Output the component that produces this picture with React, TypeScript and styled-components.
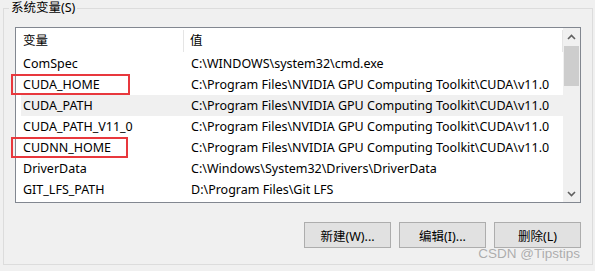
import React from "react";
import styled, { createGlobalStyle } from "styled-components";

const Global = createGlobalStyle`
  html, body { margin: 0; padding: 0; background: #f0f0f0; }
  body {
    font-family: "Noto Sans", "Noto Sans CJK SC", sans-serif;
    font-size: 12.5px;
    color: #000;
  }
`;

const Page = styled.div`
  width: 595px;
  height: 271px;
  position: relative;
  overflow: hidden;
  background: #f0f0f0;
`;

const Group = styled.fieldset`
  margin: 0 2px 0 3px;
  padding: 11px 11px 16px 11px;
  border: 1px solid #dcdcdc;
  min-width: 0;
`;

const Legend = styled.legend`
  margin-left: -6px;
  padding: 0 2px;
  font-size: 12.5px;
  line-height: 16px;
`;

const ListBox = styled.div`
  position: relative;
  height: 174px;
  border: 1px solid #828790;
  background: #fff;
  display: flex;
`;

const ListBody = styled.div`
  flex: 1;
  padding-left: 5px;
  display: flex;
  flex-direction: column;
`;

const HeaderRow = styled.div`
  display: grid;
  grid-template-columns: 163px 1fr;
  height: 25px;
`;

const HeaderCell = styled.div<{ $first?: boolean }>`
  padding-left: ${(p) => (p.$first ? "2px" : "6px")};
  height: 22px;
  line-height: 22px;
  margin-top: 2px;
  border-right: 1px solid #e5e5e5;
`;

const Row = styled.div<{ $hl?: boolean }>`
  display: grid;
  grid-template-columns: 170px 1fr;
  height: 21px;
  line-height: 21px;
  background: ${(p) => (p.$hl ? "#f0f0f0" : "transparent")};
  white-space: nowrap;
`;

const NameCell = styled.div`
  padding-left: 2px;
  position: relative;
`;

const ValueCell = styled.div`
  overflow: hidden;
`;

const Mark = styled.div`
  position: absolute;
  left: -10px;
  top: 0;
  height: 17px;
  border: 2px solid #e8383d;
`;

const ScrollBar = styled.div`
  width: 17px;
  background: #f0f0f0;
  display: flex;
  flex-direction: column;
  align-items: center;
`;

const ArrowBox = styled.div`
  height: 17px;
  width: 17px;
  display: flex;
  align-items: center;
  justify-content: center;
`;

const Track = styled.div`
  flex: 1;
  width: 17px;
`;

const Thumb = styled.div`
  margin: 1px 1px 0 1px;
  height: 40px;
  background: #cdcdcd;
`;

const Buttons = styled.div`
  display: flex;
  justify-content: flex-end;
  gap: 8px;
  margin-top: 19px;
`;

const Button = styled.div`
  width: 85px;
  height: 24px;
  border: 1px solid #adadad;
  background: #e1e1e1;
  display: flex;
  align-items: center;
  justify-content: center;
  font-size: 12.5px;
`;

const Watermark = styled.div`
  position: absolute;
  right: 15px;
  top: 246px;
  font-family: "Liberation Sans", Arial, sans-serif;
  font-size: 13.5px;
  line-height: 16px;
  color: rgba(150, 150, 150, 0.75);
  white-space: nowrap;
`;

const rows: { name: string; value: string; mark?: number }[] = [
  { name: "ComSpec", value: "C:\\WINDOWS\\system32\\cmd.exe" },
  { name: "CUDA_HOME", value: "C:\\Program Files\\NVIDIA GPU Computing Toolkit\\CUDA\\v11.0", mark: 115 },
  { name: "CUDA_PATH", value: "C:\\Program Files\\NVIDIA GPU Computing Toolkit\\CUDA\\v11.0" },
  { name: "CUDA_PATH_V11_0", value: "C:\\Program Files\\NVIDIA GPU Computing Toolkit\\CUDA\\v11.0" },
  { name: "CUDNN_HOME", value: "C:\\Program Files\\NVIDIA GPU Computing Toolkit\\CUDA\\v11.0", mark: 113 },
  { name: "DriverData", value: "C:\\Windows\\System32\\Drivers\\DriverData" },
  { name: "GIT_LFS_PATH", value: "D:\\Program Files\\Git LFS" },
];

const Chevron = ({ up }: { up?: boolean }) => (
  <svg width="9" height="6" viewBox="0 0 9 6">
    <polyline
      points={up ? "1,5 4.5,1.5 8,5" : "1,1 4.5,4.5 8,1"}
      fill="none"
      stroke="#606060"
      strokeWidth="1.6"
    />
  </svg>
);

export default function App() {
  return (
    <Page>
      <Global />
      <Group>
        <Legend>系统变量(S)</Legend>
        <ListBox>
          <ListBody>
            <HeaderRow>
              <HeaderCell $first>变量</HeaderCell>
              <HeaderCell>值</HeaderCell>
            </HeaderRow>
            {rows.map((r, i) => (
              <Row key={r.name} $hl={i === 2}>
                <NameCell>
                  {r.name}
                  {r.mark && <Mark style={{ width: r.mark }} />}
                </NameCell>
                <ValueCell>{r.value}</ValueCell>
              </Row>
            ))}
          </ListBody>
          <ScrollBar>
            <ArrowBox>
              <Chevron up />
            </ArrowBox>
            <Track>
              <Thumb />
            </Track>
            <ArrowBox>
              <Chevron />
            </ArrowBox>
          </ScrollBar>
        </ListBox>
        <Buttons>
          <Button>新建(W)...</Button>
          <Button>编辑(I)...</Button>
          <Button>删除(L)</Button>
        </Buttons>
      </Group>
      <Watermark>CSDN @Tipstips</Watermark>
    </Page>
  );
}
